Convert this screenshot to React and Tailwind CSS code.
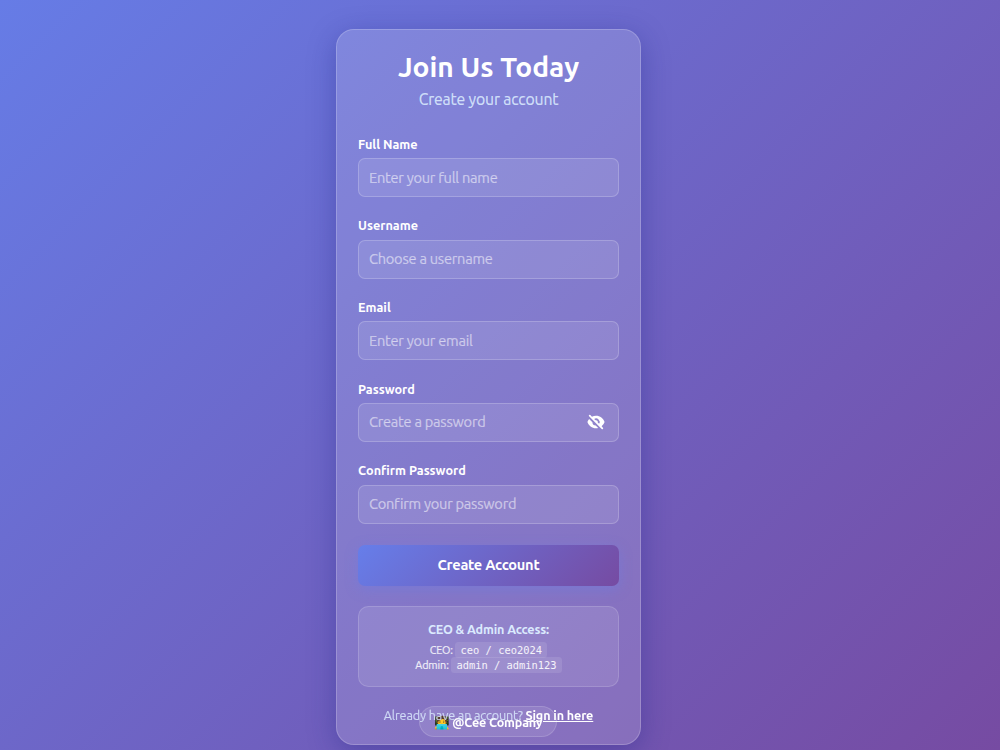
import React from "react";
import { HiEyeOff } from "react-icons/hi";

const fields = [
  { id: "fullName", label: "Full Name", placeholder: "Enter your full name", type: "text" },
  { id: "username", label: "Username", placeholder: "Choose a username", type: "text" },
  { id: "email", label: "Email", placeholder: "Enter your email", type: "email" },
  { id: "password", label: "Password", placeholder: "Create a password", type: "password", toggle: true },
  { id: "confirm", label: "Confirm Password", placeholder: "Confirm your password", type: "password" },
];

function Field({ id, label, placeholder, type, toggle }) {
  return (
    <div className="mb-[21px] h-[60.67px]">
      <label htmlFor={id} className="block h-[21.67px] pt-[0.3px] text-[12.69px] leading-[14px] font-bold text-white">
        {label}
      </label>
      <div className="flex h-[39px] items-center rounded-[7px] border border-white/20 bg-white/10 pr-[13px] pl-[10px]">
        <input
          id={id}
          type={type}
          placeholder={placeholder}
          className="min-w-0 flex-1 bg-transparent text-[14.6px] tracking-[-0.24px] text-white outline-none [-webkit-text-stroke:0.2px] placeholder:text-white/50"
        />
        {toggle && (
          <button type="button" className="text-white">
            <HiEyeOff size={18} />
          </button>
        )}
      </div>
    </div>
  );
}

function Credential({ role, value }) {
  return (
    <p className="h-[15px] text-[10.8px] leading-[15px] tracking-[-0.1px] whitespace-pre text-white/85 [-webkit-text-stroke:0.15px]">
      {role}{" "}
      <code className="rounded-[3.5px] bg-white/10 px-[5.3px] py-[1.8px] font-['DejaVu_Sans_Mono',monospace] text-[10.4px] tracking-normal text-white/90 [-webkit-text-stroke:0px]">
        {value}
      </code>
    </p>
  );
}

export default function App() {
  return (
    <div className="h-[750px] overflow-hidden bg-[linear-gradient(135deg,#667ce6_0%,#764ba2_100%)] pt-[29px] pr-[23px] font-[Ubuntu,'Noto_Sans',sans-serif]">
      <div className="mx-auto h-[716px] w-[305px] rounded-[18px] border border-white/20 bg-white/15 px-[21px] pt-[20px] shadow-[0_7px_28px_rgba(31,38,135,0.37)]">
        <div className="mb-[27.3px] text-center">
          <h1 className="text-[28.2px] leading-[34px] font-bold text-white">Join Us Today</h1>
          <p className="mt-[5px] text-[15.8px] leading-[20px] tracking-[-0.16px] text-[#dbeafe]/90 [-webkit-text-stroke:0.2px]">Create your account</p>
        </div>
        <form>
          {fields.map((field) => (
            <Field key={field.id} {...field} />
          ))}
          <button
            type="button"
            className="h-[41px] w-full rounded-[7px] bg-[linear-gradient(135deg,#667eea_0%,#764ba2_100%)] text-[14.6px] font-bold tracking-[-0.26px] text-white shadow-[0_3.5px_13px_rgba(102,126,234,0.4)]"
          >
            Create Account
          </button>
        </form>
        <div className="mt-[20.7px] h-[81px] rounded-[10.5px] border border-white/15 bg-white/10 pt-[14px] text-center">
          <p className="mb-[6px] text-[12.6px] leading-[16px] font-bold tracking-[-0.14px] text-[#dbeafe]">CEO &amp; Admin Access:</p>
          <Credential role="CEO:" value="ceo / ceo2024" />
          <Credential role="Admin:" value="admin / admin123" />
        </div>
        <p className="relative z-10 mt-[18.8px] text-center text-[12.6px] leading-[18px] tracking-[-0.12px] text-[#dbeafe]/80 [-webkit-text-stroke:0.15px]">
          Already have an account?{" "}
          <a href="#" className="font-bold text-white underline [-webkit-text-stroke:0px]">Sign in here</a>
        </p>
      </div>
      {/* company badge sits at the bottom of the page, under the sign-in link */}
      <div className="fixed bottom-[13px] left-[488px] flex h-[31px] w-[138px] -translate-x-1/2 items-center justify-center rounded-full border border-white/15 bg-white/10 pt-px text-[12.6px] font-bold tracking-[-0.18px] whitespace-pre text-white">
        🧑‍💻 @Cee Company
      </div>
    </div>
  );
}
